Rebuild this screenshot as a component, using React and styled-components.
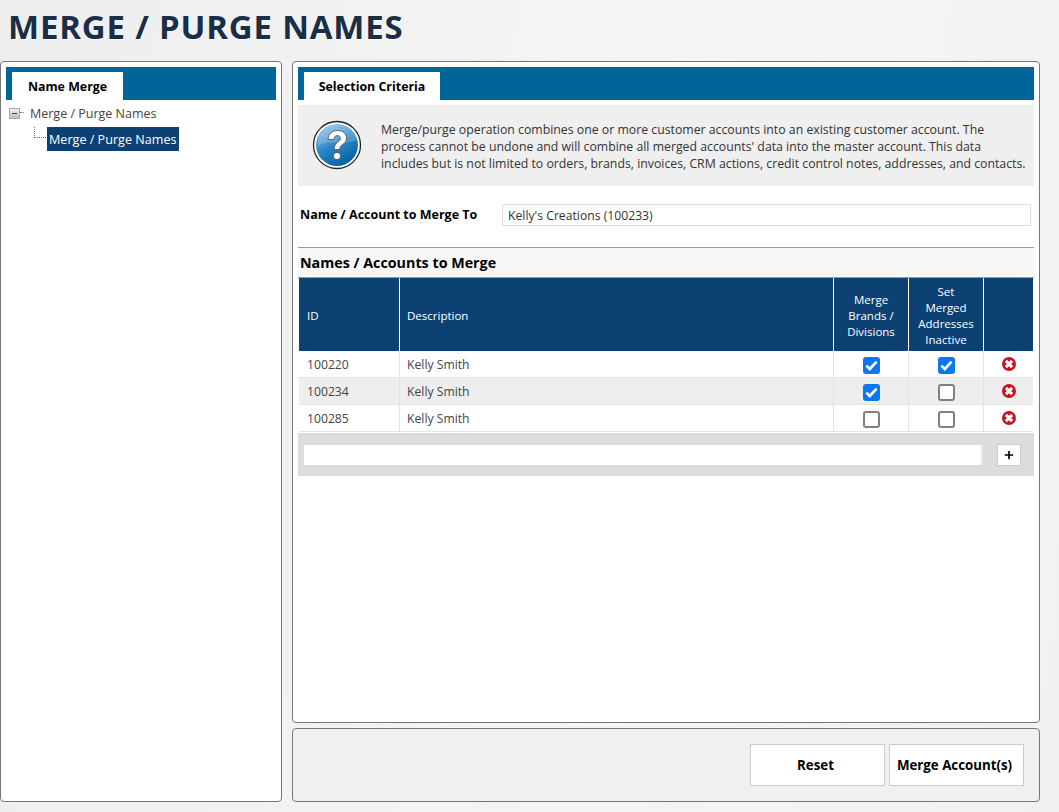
import React from 'react';
import styled, { createGlobalStyle } from 'styled-components';
import { Plus } from 'lucide-react';

const rows = [
  { id: '100220', name: 'Kelly Smith', brands: true, inactive: true },
  { id: '100234', name: 'Kelly Smith', brands: true, inactive: false },
  { id: '100285', name: 'Kelly Smith', brands: false, inactive: false }
];

const GlobalStyle = createGlobalStyle`
  html, body {
    margin: 0;
    padding: 0;
    background: #f2f2f2;
    font-family: "Open Sans", "Noto Sans", "Liberation Sans", sans-serif;
    color: #333;
  }
  * {
    box-sizing: border-box;
  }
`;

const HelpIcon = () => (
  <svg width="50" height="50" viewBox="0 0 50 50">
    <defs>
      <linearGradient id="helpFill" x1="0.2" y1="0" x2="0.7" y2="1">
        <stop offset="0" stopColor="#8cc6ea" />
        <stop offset="0.5" stopColor="#2a86c6" />
        <stop offset="1" stopColor="#04609f" />
      </linearGradient>
    </defs>
    <circle cx="25" cy="25" r="23.5" fill="#fff" stroke="#222" strokeWidth="1.3" />
    <circle cx="25" cy="25" r="21" fill="url(#helpFill)" />
    <path d="M6 27C14 17 30 28 46 19C44 10 35 4 25 4C14 4 5 14 6 27Z" fill="#fff" opacity="0.18" />
    <path
      d="M16 19.5C16.5 13.5 20.5 10.5 25.5 10.5C31 10.5 34.5 13.8 34.5 18C34.5 21.6 32.4 23.3 30.2 24.9C28.4 26.2 27.8 27 27.8 29.5H22.3C22.2 26 23 24.1 25.5 22.3C27.4 21 28.4 20 28.4 18.4C28.4 16.6 27.2 15.6 25.4 15.6C23.3 15.6 22.1 17 21.9 19.5Z"
      fill="#fff"
      stroke="#4b4b4b"
      strokeWidth="0.8"
    />
    <circle cx="25" cy="36" r="3.6" fill="#fff" stroke="#4b4b4b" strokeWidth="0.8" />
  </svg>
);

const RemoveIcon = () => (
  <RemoveGlyph width="14" height="14" viewBox="0 0 14 14">
    <circle cx="7" cy="7" r="7" fill="#cc1020" />
    <path d="M3.9 3.9L10.1 10.1M10.1 3.9L3.9 10.1" stroke="#fff" strokeWidth="3" />
  </RemoveGlyph>
);

const Check = ({ checked }) => (
  <CheckBox $checked={checked}>
    {checked && (
      <svg width="13" height="11" viewBox="0 0 13 11">
        <path d="M1.4 5.6L4.8 9L11.6 1.6" fill="none" stroke="#fff" strokeWidth="2.6" />
      </svg>
    )}
  </CheckBox>
);

const App = () => (
  <>
    <GlobalStyle />
    <Page>
      <Title>MERGE / PURGE NAMES</Title>
      <Columns>
        <Panel>
          <TabBar>
            <Tab $width={111}>Name Merge</Tab>
          </TabBar>
          <Tree>
            <TreeRoot>
              <Expander />
              <TreeDots $width={4} />
              <RootLabel>Merge / Purge Names</RootLabel>
            </TreeRoot>
            <TreeChild>
              <ChildLine />
              <Selected>Merge / Purge Names</Selected>
            </TreeChild>
          </Tree>
        </Panel>
        <RightColumn>
          <MainPanel>
            <TabBar>
              <Tab $width={136}>Selection Criteria</Tab>
            </TabBar>
            <Info>
              <HelpIcon />
              <InfoText>
                Merge/purge operation combines one or more customer accounts into an existing customer account. The
                process cannot be undone and will combine all merged accounts' data into the master account. This data
                includes but is not limited to orders, brands, invoices, CRM actions, credit control notes, addresses, and contacts.
              </InfoText>
            </Info>
            <NameRow>
              <NameLabel>Name / Account to Merge To</NameLabel>
              <NameValue>Kelly's Creations (100233)</NameValue>
            </NameRow>
            <SectionHead>Names / Accounts to Merge</SectionHead>
            <Table>
              <colgroup>
                <col style={{ width: 101 }} />
                <col />
                <col style={{ width: 75 }} />
                <col style={{ width: 75 }} />
                <col style={{ width: 49 }} />
              </colgroup>
              <thead>
                <tr>
                  <HeadCell>ID</HeadCell>
                  <HeadCell>Description</HeadCell>
                  <HeadCell $center>Merge Brands / Divisions</HeadCell>
                  <HeadCell $center>Set Merged Addresses Inactive</HeadCell>
                  <HeadCell />
                </tr>
              </thead>
              <tbody>
                {rows.map((row, i) => (
                  <Row key={row.id} $alt={i % 2 === 1}>
                    <Cell>{row.id}</Cell>
                    <Cell>{row.name}</Cell>
                    <Cell $center><Check checked={row.brands} /></Cell>
                    <Cell $center><Check checked={row.inactive} /></Cell>
                    <Cell $center><RemoveIcon /></Cell>
                  </Row>
                ))}
              </tbody>
            </Table>
            <AddRow>
              <AddInput />
              <AddButton><Plus size={12} strokeWidth={3.4} color="#000" /></AddButton>
            </AddRow>
          </MainPanel>
          <ActionPanel>
            <ActionButton>Reset</ActionButton>
            <ActionButton>Merge Account(s)</ActionButton>
          </ActionPanel>
        </RightColumn>
      </Columns>
    </Page>
  </>
);

const Page = styled.div`
  width: 1059px;
  height: 812px;
  overflow: hidden;
  display: flex;
  flex-direction: column;
  background: linear-gradient(100deg, #eeeeee, #f5f5f5 60%, #f1f1f1);
`;

const Title = styled.h1`
  margin: 0;
  height: 61px;
  padding: 7px 0 0 8px;
  font-size: 33px;
  line-height: 40px;
  font-weight: 700;
  letter-spacing: 0.8px;
  color: #1a2e47;
  text-shadow: 1px 1px 0 #fff;
`;

const Columns = styled.div`
  display: grid;
  grid-template-columns: 282px 748px;
  column-gap: 10px;
  height: 741px;
`;

const Panel = styled.section`
  background: #fff;
  border: 1px solid #777;
  border-radius: 4px;
  padding: 5px;
`;

const RightColumn = styled.div`
  display: flex;
  flex-direction: column;
  gap: 5px;
`;

const MainPanel = styled(Panel)`
  height: 662px;
`;

const TabBar = styled.div`
  height: 33px;
  background: #006699;
  padding: 5px 0 0 6px;
`;

const Tab = styled.div`
  width: ${(p) => p.$width}px;
  height: 28px;
  padding-top: 1px;
  background: #fff;
  color: #000;
  font-size: 12.4px;
  font-weight: 700;
  line-height: 28px;
  text-align: center;
`;

const Tree = styled.div`
  padding: 6px 0 0 3px;
`;

const TreeRoot = styled.div`
  display: flex;
  align-items: center;
  height: 15px;
  color: #444;
  font-size: 12.5px;
`;

const Expander = styled.span`
  position: relative;
  width: 11px;
  height: 11px;
  border: 1px solid #aaa;
  background: linear-gradient(#f2f2f2, #bbb);
  &::after {
    content: '';
    position: absolute;
    left: 2px;
    top: 4px;
    width: 5px;
    height: 1px;
    background: #444;
  }
`;

const TreeDots = styled.span`
  width: ${(p) => p.$width}px;
  border-top: 1px dotted #777;
  margin: -2px 6px 0 0;
`;

const RootLabel = styled.span`
  line-height: 15px;
`;

const TreeChild = styled.div`
  display: flex;
  align-items: flex-start;
  margin-top: 6px;
  padding-left: 25px;
`;

const ChildLine = styled.span`
  width: 12px;
  height: 11px;
  margin-right: 1px;
  border-left: 1px dotted #777;
  border-bottom: 1px dotted #777;
`;

const Selected = styled.div`
  padding: 1px 3px 0 2px;
  height: 24px;
  line-height: 23px;
  background: #0d4174;
  color: #fff;
  font-size: 12.6px;
  white-space: nowrap;
`;

const Info = styled.div`
  display: flex;
  align-items: center;
  height: 81px;
  margin-top: 5px;
  background: #efefef;
  padding: 0 8px 0 14px;
  gap: 19px;
  color: #333;
  svg {
    flex: none;
    margin-top: -2px;
  }
`;

const InfoText = styled.div`
  padding-top: 2px;
  font-size: 12.29px;
  line-height: 17px;
`;

const NameRow = styled.div`
  display: flex;
  align-items: center;
  height: 22px;
  margin: 18px 3px 0 2px;
`;

const NameLabel = styled.div`
  width: 202px;
  flex: none;
  padding-bottom: 2px;
  font-size: 12.5px;
  font-weight: 700;
  color: #000;
`;

const NameValue = styled.div`
  flex: 1;
  height: 22px;
  line-height: 21px;
  padding-left: 5px;
  border: 1px solid #ddd;
  background: #fff;
  font-size: 12.2px;
  color: #333;
`;

const SectionHead = styled.div`
  height: 31px;
  margin-top: 21px;
  padding-left: 2px;
  background: #f7f7f7;
  border-top: 1px solid #999;
  border-bottom: 1px solid #999;
  color: #000;
  font-size: 14.3px;
  font-weight: 700;
  line-height: 29px;
`;

const Table = styled.table`
  width: 734px;
  table-layout: fixed;
  border-collapse: separate;
  border-spacing: 0;
  margin-left: 1px;
`;

const HeadCell = styled.th`
  height: 73px;
  padding: 2px 7px 0;
  background: #0d4174;
  border-right: 1px solid #fff;
  color: #fff;
  font-size: 11.5px;
  font-weight: 400;
  line-height: 16px;
  text-align: ${(p) => (p.$center ? 'center' : 'left')};
  &:first-child {
    padding-left: 8px;
  }
  &:last-child {
    border-right: none;
  }
`;

const Row = styled.tr`
  background: ${(p) => (p.$alt ? '#eeeeee' : '#fff')};
`;

const Cell = styled.td`
  height: 27px;
  padding: ${(p) => (p.$center ? '2px 0 0' : '1px 7px 0')};
  border-right: 1px solid #e4e4e4;
  border-bottom: 1px solid #e4e4e4;
  font-size: 12.2px;
  color: #444;
  text-align: ${(p) => (p.$center ? 'center' : 'left')};
  vertical-align: middle;
  line-height: ${(p) => (p.$center ? '0' : '24px')};
  &:first-child {
    padding-left: 8px;
  }
  &:last-child {
    border-right: none;
  }
`;

const RemoveGlyph = styled.svg`
  margin-top: -3px;
`;

const CheckBox = styled.span`
  display: inline-flex;
  align-items: center;
  justify-content: center;
  width: 17px;
  height: 17px;
  border-radius: 3px;
  background: ${(p) => (p.$checked ? '#0b78f0' : '#fff')};
  border: ${(p) => (p.$checked ? 'none' : '2px solid #808080')};
`;

const AddRow = styled.div`
  display: flex;
  align-items: center;
  width: 736px;
  height: 43px;
  margin-top: 1px;
  padding: 1px 13px 0 6px;
  background: #dcdcdc;
`;

const AddInput = styled.div`
  flex: 1;
  height: 20px;
  background: #fff;
  border-right: 2px solid #e6e6e6;
`;

const AddButton = styled.div`
  display: flex;
  align-items: center;
  justify-content: center;
  width: 24px;
  height: 22px;
  margin-left: 14px;
  background: #fff;
  border: 1px solid #ccc;
`;

const ActionPanel = styled.div`
  display: flex;
  justify-content: flex-end;
  align-items: center;
  gap: 4px;
  height: 74px;
  padding-right: 15px;
  background: #f0f0f0;
  border: 1px solid #777;
  border-radius: 4px;
`;

const ActionButton = styled.div`
  width: 135px;
  height: 42px;
  padding-right: 4px;
  background: #fff;
  border: 1px solid #ccc;
  color: #000;
  font-size: 13.3px;
  font-weight: 700;
  line-height: 40px;
  text-align: center;
`;

export default App;
